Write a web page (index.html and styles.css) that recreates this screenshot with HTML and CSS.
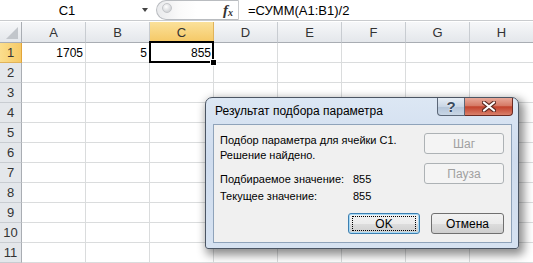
FILE: index.html
```html
<!DOCTYPE html>
<html>
<head>
	<meta charset="utf-8">
	<title>Подбор параметра</title>
	<link rel="stylesheet" href="styles.css">
</head>
<body>
	<div class="formula-bar">
		<div class="name-box">C1</div>
		<div class="name-arrow"></div>
		<div class="fx-box">
			<span class="grip"></span>
			<span class="fx"><i>f</i><sub>x</sub></span>
		</div>
		<div class="formula">=СУММ(A1:B1)/2</div>
	</div>

	<div class="sheet">
		<div class="corner"></div>
		<div class="col-head">A</div>
		<div class="col-head">B</div>
		<div class="col-head active">C</div>
		<div class="col-head">D</div>
		<div class="col-head">E</div>
		<div class="col-head">F</div>
		<div class="col-head">G</div>
		<div class="col-head">H</div>

		<div class="row-head active">1</div>
		<div class="cell num">1705</div>
		<div class="cell num">5</div>
		<div class="cell num selected">855</div>
		<div class="cell"></div>
		<div class="cell"></div>
		<div class="cell"></div>
		<div class="cell"></div>
		<div class="cell"></div>
	</div>

	<div class="dialog">
		<div class="title-bar">
			<div class="title">Результат подбора параметра</div>
			<div class="caption-buttons">
				<div class="cap-btn help">?</div>
				<div class="cap-btn close">
					<svg width="14" height="11" viewBox="0 0 14 11">
						<path d="M2 1.5 L12 9.5 M12 1.5 L2 9.5" stroke="#5a2a22" stroke-width="4.2" stroke-linecap="round"/>
						<path d="M2 1.5 L12 9.5 M12 1.5 L2 9.5" stroke="#ffffff" stroke-width="2.2" stroke-linecap="round"/>
					</svg>
				</div>
			</div>
		</div>
		<div class="client">
			<div class="top-part">
				<div class="info">
					<div>Подбор параметра для ячейки C1.</div>
					<div>Решение найдено.</div>
					<div class="values">
						<div class="val-row"><span class="val-label">Подбираемое значение:</span><span>855</span></div>
						<div class="val-row"><span class="val-label">Текущее значение:</span><span>855</span></div>
					</div>
				</div>
				<div class="side-buttons">
					<div class="btn disabled">Шаг</div>
					<div class="btn disabled">Пауза</div>
				</div>
			</div>
			<div class="bottom-buttons">
				<div class="btn default"><span class="focus">OK</span></div>
				<div class="btn cancel">Отмена</div>
			</div>
		</div>
	</div>

	<script type="text/javascript">
		// пустые строки 2..11
		let sheet = document.querySelector('.sheet');
		for (let r = 2; r <= 11; r++) {
			let head = document.createElement('div');
			head.className = 'row-head';
			head.textContent = r;
			sheet.appendChild(head);
			for (let c = 0; c < 8; c++) {
				let cell = document.createElement('div');
				cell.className = 'cell';
				sheet.appendChild(cell);
			}
		}
	</script>
</body>
</html>
```

FILE: styles.css
```css
body {
	margin: 0;
	width: 533px;
	height: 263px;
	overflow: hidden;
	position: relative;
	background: #ffffff;
	font-family: "Liberation Sans", Arial, sans-serif;
}

/* строка формул */
.formula-bar {
	display: flex;
	align-items: center;
	height: 20px;
	border-bottom: 1px solid #c9cbce;
	margin-bottom: 1px;
	font-size: 13px;
	color: #000;
}
.name-box {
	width: 134px;
	text-align: center;
}
.name-arrow {
	width: 0;
	height: 0;
	margin-left: 8px;
	border-left: 3px solid transparent;
	border-right: 3px solid transparent;
	border-top: 4px solid #444;
}
.fx-box {
	display: flex;
	align-items: center;
	margin-left: 8px;
	width: 83px;
	height: 20px;
	box-sizing: border-box;
	border: 1px solid #b9bcc0;
	border-right: 1px solid #c9cbce;
	border-radius: 10px 0 0 10px;
	background: linear-gradient(90deg, #e9eaec 0, #fafafa 22px, #ffffff 40px);
}
.grip {
	width: 8px;
	height: 8px;
	margin-left: 5px;
	margin-top: -4px;
	border-radius: 50%;
	background: radial-gradient(circle at 40% 35%, #ffffff 0, #d4d6d9 70%);
	border: 1px solid #c3c5c8;
}
.fx {
	margin-left: auto;
	margin-right: 5px;
	font-family: "Liberation Serif", serif;
	font-weight: bold;
	font-size: 15px;
	color: #333;
}
.fx sub {
	font-size: 10px;
	font-style: italic;
	vertical-align: -1px;
}
.formula {
	margin-left: 9px;
}

/* лист */
.sheet {
	display: grid;
	grid-template-columns: 22px repeat(8, 64px);
	grid-template-rows: 21px;
	grid-auto-rows: 20px;
	font-size: 12px;
}
.corner,
.col-head,
.row-head {
	box-sizing: border-box;
	background: linear-gradient(#f6f7f9, #e4e7eb);
	color: #333;
	display: flex;
	align-items: center;
	justify-content: center;
}
.corner {
	position: relative;
	border-right: 1px solid #a9adb3;
	border-bottom: 1px solid #a9adb3;
}
.corner::after {
	content: "";
	position: absolute;
	right: 3px;
	bottom: 3px;
	border-left: 12px solid transparent;
	border-bottom: 12px solid #c2c6cb;
}
.col-head {
	border-right: 1px solid #c8ccd1;
	border-bottom: 1px solid #a9adb3;
	font-size: 13px;
	padding-top: 1px;
}
.row-head {
	background: #e4e7eb;
	border-right: 1px solid #a9adb3;
	border-bottom: 1px solid #c8ccd1;
	font-size: 13px;
}
.col-head.active {
	background: linear-gradient(#fbe19a, #f5c865);
	border-bottom-color: #e2a53a;
	border-right-color: #e0b35a;
}
.row-head.active {
	background: linear-gradient(90deg, #fbde8d, #f6ca67);
	border-right-color: #e2a53a;
	border-bottom-color: #e0b35a;
}
.cell {
	box-sizing: border-box;
	border-right: 1px solid #dadcdd;
	border-bottom: 1px solid #dadcdd;
}
.num {
	display: flex;
	align-items: center;
	justify-content: flex-end;
	padding-right: 2px;
	padding-top: 1px;
}
.selected {
	position: relative;
}
.selected::after {
	content: "";
	position: absolute;
	left: -1px;
	top: -2px;
	right: -1px;
	bottom: -1px;
	border: 2px solid #000;
}
.selected::before {
	content: "";
	position: absolute;
	right: -4px;
	bottom: -4px;
	width: 5px;
	height: 5px;
	background: #000;
	border: 1px solid #fff;
	z-index: 2;
}

/* диалог */
.dialog {
	position: absolute;
	left: 205px;
	top: 97px;
	width: 314px;
	height: 152px;
	box-sizing: border-box;
	border: 1px solid #4b5563;
	border-radius: 7px 7px 3px 3px;
	background: linear-gradient(#dce7f4, #cfdcee 40%, #d6e2f1);
	box-shadow: 3px 4px 10px 2px rgba(0, 0, 0, 0.45);
	display: flex;
	flex-direction: column;
	padding: 0 6px 5px 7px;
}
.title-bar {
	display: flex;
	height: 26px;
}
.title {
	flex: 1;
	font-size: 12px;
	padding-left: 2px;
	padding-top: 6px;
	color: #000;
}
.caption-buttons {
	display: flex;
	height: 18px;
	margin-right: -1px;
}
.cap-btn {
	box-sizing: border-box;
	height: 18px;
	display: flex;
	align-items: center;
	justify-content: center;
	border: 1px solid #5b6778;
	border-top: none;
}
.help {
	width: 28px;
	border-radius: 0 0 0 4px;
	background: linear-gradient(#e6edf5, #c9d6e5 50%, #b3c4d8 52%, #c8d6e6);
	font-size: 15px;
	font-weight: bold;
	color: #3b4b5f;
	text-shadow: 0 0 2px #fff;
}
.close {
	width: 48px;
	border-left: none;
	border-color: #6b2a22;
	border-radius: 0 0 4px 0;
	background: linear-gradient(#e9a99a, #d67a66 45%, #c2422c 52%, #d9806b);
}
.client {
	flex: 1;
	box-sizing: border-box;
	background: #f0f0f0;
	border: 1px solid #8fa3ba;
	display: flex;
	flex-direction: column;
	padding: 8px 7px 8px 6px;
	font-size: 11px;
	color: #000;
}
.top-part {
	display: flex;
	justify-content: space-between;
}
.info div {
	line-height: 15px;
}
.values {
	margin-top: 8px;
}
.values .val-row {
	display: flex;
	line-height: 17px;
}
.val-label {
	width: 133px;
}
.side-buttons {
	display: flex;
	flex-direction: column;
	gap: 9px;
}
.bottom-buttons {
	margin-top: auto;
	display: flex;
	justify-content: flex-end;
	gap: 11px;
}
.btn {
	box-sizing: border-box;
	width: 80px;
	height: 21px;
	border: 1px solid #707070;
	border-radius: 3px;
	background: linear-gradient(#f2f2f2, #ebebeb 50%, #dddddd 51%, #cfcfcf);
	display: flex;
	align-items: center;
	justify-content: center;
	font-size: 12px;
}
.btn.disabled {
	border-color: #adb2b5;
	background: #f4f4f4;
	color: #a0a0a0;
}
.btn.cancel {
	width: 73px;
}
.btn.default {
	width: 72px;
	border-color: #3c7fb1;
	box-shadow: inset 0 0 0 1px #a7d9f5;
}
.focus {
	box-sizing: border-box;
	width: 64px;
	height: 15px;
	border: 1px dotted #000;
	display: flex;
	align-items: center;
	justify-content: center;
}
```
